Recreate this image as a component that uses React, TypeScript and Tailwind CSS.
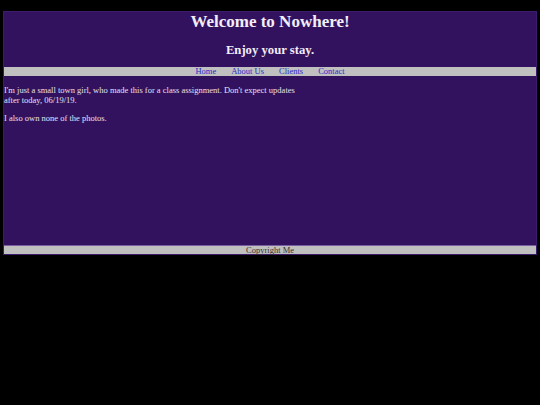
export default function App() {
  const links = ['Home', 'About Us', 'Clients', 'Contact'];

  return (
    <div className="w-[540px] h-[405px] bg-black pt-[11px] px-[3px] font-['Liberation_Serif',serif]">
      <div className="bg-[#32125e] border border-[#3c1c6a]">
        <header className="text-center text-[#f2eefa] font-bold">
          <h1 className="text-[17px] leading-[20px]">Welcome to Nowhere!</h1>
          <h2 className="text-[12.7px] leading-[15px] mt-[11px] pb-[9px]">Enjoy your stay.</h2>
        </header>

        <nav className="bg-[#c0c0c0] h-[9px] flex justify-center items-center gap-[15px] text-[8.5px] leading-[9px]">
          {links.map((l) => (
            <a key={l} href="#" className="text-[#2b2bc6]">
              {l}
            </a>
          ))}
        </nav>

        <main className="h-[169px] pt-[9px] text-[8.5px] leading-[10px] text-[#e4e0ee]">
          <p className="w-[296px]">
            I'm just a small town girl, who made this for a class assignment. Don't expect updates
            after today, 06/19/19.
          </p>
          <p className="mt-[8px]">I also own none of the photos.</p>
        </main>

        <footer className="bg-[#c0c0c0] h-[9px] border-t border-[#7a5fa0] text-center text-[8.5px] leading-[9px] text-[#333]">
          Copyright Me
        </footer>
      </div>
    </div>
  );
}
